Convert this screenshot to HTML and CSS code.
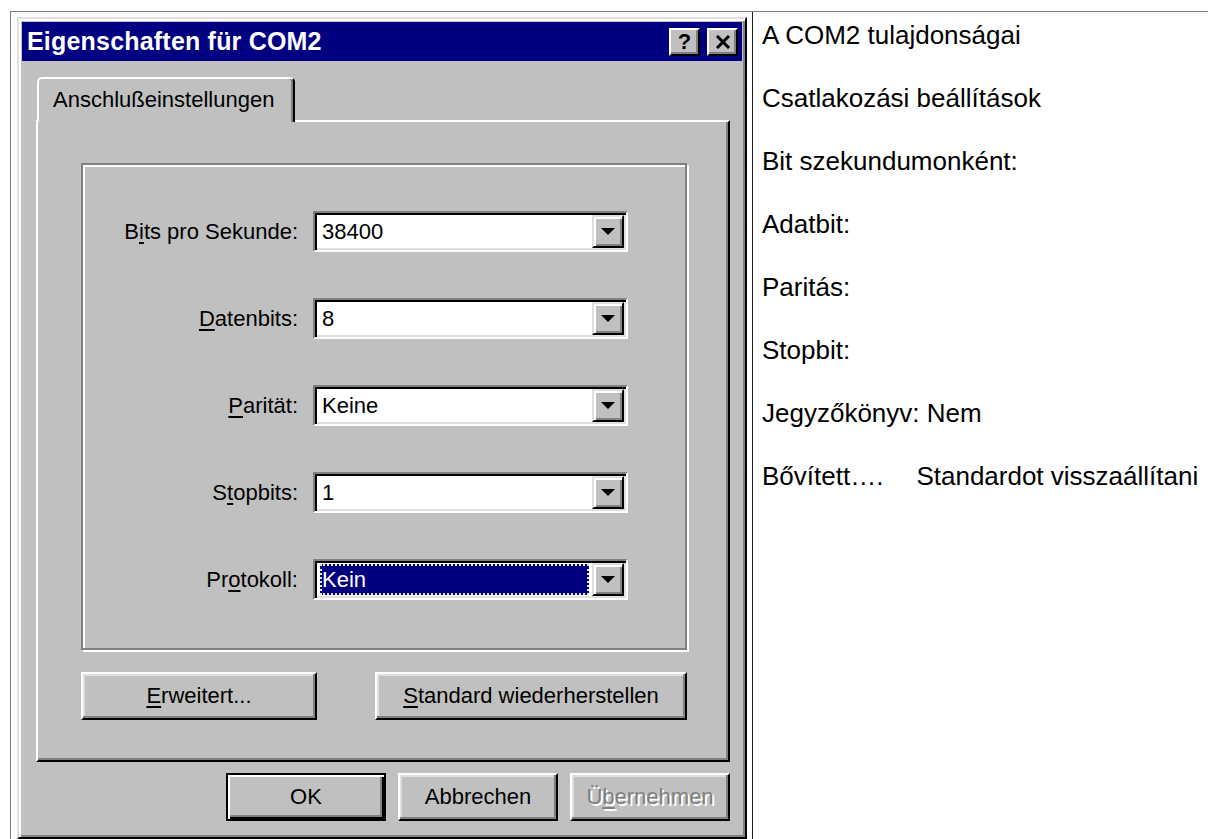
FILE: index.html
```html
<!DOCTYPE html>
<html lang="de">
<head>
<meta charset="utf-8">
<title>Eigenschaften für COM2</title>
<link rel="stylesheet" href="styles.css">
</head>
<body>
<div class="doc">
  <div class="shot">
    <div class="window">
      <div class="titlebar">
        <span class="title">Eigenschaften für COM2</span>
        <div class="cap-btns">
          <div class="cap-btn help">?</div>
          <div class="cap-btn">
            <svg width="16" height="14" viewBox="0 0 16 14"><path d="M2 1 L14 13 M14 1 L2 13" stroke="#000" stroke-width="3" fill="none"/></svg>
          </div>
        </div>
      </div>
      <div class="content">
        <div class="tabstrip">
          <div class="tab">Anschlußeinstellungen</div>
        </div>
        <div class="panel">
          <div class="group">
            <div class="row">
              <span class="label">B<u>i</u>ts pro Sekunde:</span>
              <div class="combo"><span class="value">38400</span><span class="drop"><i class="arrow"></i></span></div>
            </div>
            <div class="row">
              <span class="label"><u>D</u>atenbits:</span>
              <div class="combo"><span class="value">8</span><span class="drop"><i class="arrow"></i></span></div>
            </div>
            <div class="row">
              <span class="label"><u>P</u>arität:</span>
              <div class="combo"><span class="value">Keine</span><span class="drop"><i class="arrow"></i></span></div>
            </div>
            <div class="row">
              <span class="label">S<u>t</u>opbits:</span>
              <div class="combo"><span class="value">1</span><span class="drop"><i class="arrow"></i></span></div>
            </div>
            <div class="row">
              <span class="label">Pr<u>o</u>tokoll:</span>
              <div class="combo"><span class="value selected">Kein</span><span class="drop"><i class="arrow"></i></span></div>
            </div>
          </div>
          <div class="panel-btns">
            <div class="btn wide-1"><u>E</u>rweitert...</div>
            <div class="btn wide-2"><u>S</u>tandard wiederherstellen</div>
          </div>
        </div>
        <div class="footer">
          <div class="btn default">OK</div>
          <div class="btn">Abbrechen</div>
          <div class="btn disabled">Ü<u>b</u>ernehmen</div>
        </div>
      </div>
    </div>
  </div>
  <div class="notes">
    <p>A COM2 tulajdonságai</p>
    <p>Csatlakozási beállítások</p>
    <p>Bit szekundumonként:</p>
    <p>Adatbit:</p>
    <p>Paritás:</p>
    <p>Stopbit:</p>
    <p>Jegyzőkönyv: Nem</p>
    <p><span>Bővített….</span><span class="gap">Standardot visszaállítani</span></p>
  </div>
</div>
</body>
</html>
```

FILE: styles.css
```css
* { box-sizing: border-box; }

html, body {
  margin: 0;
  padding: 0;
  background: #fff;
}

body {
  font-family: "Liberation Sans", Arial, sans-serif;
  color: #000;
  overflow: hidden;
}

/* two-cell document table; it continues below the fold */
.doc {
  display: flex;
  margin: 11px 0 0 10px;
  border-top: 1px solid #7b7b7b;
  border-left: 1px solid #7b7b7b;
  height: 828px;
}

.shot {
  flex: 0 0 742px;
  border-right: 1px solid #1e1e1e;
  padding: 5px 0 0 6px;
}

.notes {
  flex: 1;
  padding: 8px 0 0 9px;
  font-size: 26px;
  line-height: 30px;
  display: flex;
  flex-direction: column;
  gap: 33px;
}

.notes p { margin: 0; white-space: nowrap; }
.notes .gap { margin-left: 33px; }

/* dialog window */
.window {
  width: 730px;
  height: 822px;
  background: #c0c0c0;
  border: 2px solid;
  border-color: #dfdfdf #000 #000 #dfdfdf;
  box-shadow: inset 2px 2px #fff, inset -2px -2px #808080;
  padding: 3px;
  display: flex;
  flex-direction: column;
  font-size: 22px;
}

.titlebar {
  height: 39px;
  flex: 0 0 39px;
  background: #000080;
  color: #fff;
  display: flex;
  align-items: center;
  justify-content: space-between;
  padding: 0 4px 0 5px;
}

.title {
  font-weight: bold;
  font-size: 25px;
  letter-spacing: 0.2px;
}

.cap-btns {
  display: flex;
  gap: 7px;
  margin-top: 1px;
}

.cap-btn {
  width: 31px;
  height: 28px;
  background: #c0c0c0;
  border: 2px solid;
  border-color: #fff #000 #000 #fff;
  box-shadow: inset -2px -2px #808080;
  display: flex;
  align-items: center;
  justify-content: center;
  color: #000;
}

.cap-btn.help {
  font-weight: bold;
  font-size: 22px;
  line-height: 1;
}

.content {
  flex: 1;
  padding: 16px 12px 0 14px;
  display: flex;
  flex-direction: column;
}

/* tab strip */
.tabstrip {
  display: flex;
  padding-left: 1px;
}

.tab {
  position: relative;
  z-index: 1;
  width: 258px;
  height: 45px;
  margin-bottom: -2px;
  background: #c0c0c0;
  border: 2px solid;
  border-bottom: none;
  border-color: #fff #000 transparent #fff;
  border-radius: 5px 5px 0 0;
  box-shadow: inset -2px 0 #808080;
  padding: 8px 0 0 14px;
  line-height: 25px;
  white-space: nowrap;
}

.panel {
  height: 642px;
  flex: 0 0 642px;
  border: 2px solid;
  border-color: #fff #000 #000 #fff;
  box-shadow: inset -2px -2px #808080;
  padding: 41px 0 0 43px;
}

/* etched group box */
.group {
  width: 606px;
  height: 487px;
  border: 2px solid #808080;
  box-shadow: inset 2px 2px #fff, 2px 2px #fff;
  padding: 46px 0 0 0;
  display: flex;
  flex-direction: column;
  gap: 46px;
}

.row {
  display: flex;
  align-items: center;
  height: 41px;
}

.label {
  width: 215px;
  text-align: right;
  margin-right: 15px;
  white-space: nowrap;
}

u {
  text-decoration-thickness: 2px;
  text-underline-offset: 3px;
}

/* drop-down combo */
.combo {
  width: 315px;
  height: 41px;
  background: #fff;
  border: 2px solid;
  border-color: #808080 #fff #fff #808080;
  box-shadow: inset 2px 2px #000, inset -2px -2px #dfdfdf;
  padding: 2px;
  display: flex;
}

.value {
  flex: 1;
  padding-left: 5px;
  line-height: 33px;
}

.value.selected {
  margin: 1px 3px 1px 3px;
  padding-left: 2px;
  line-height: 31px;
  background: #000080;
  color: #fff;
  outline: 2px dotted #e8e8c0;
  outline-offset: -2px;
}

.drop {
  width: 32px;
  height: 33px;
  background: #c0c0c0;
  border: 2px solid;
  border-color: #dfdfdf #000 #000 #dfdfdf;
  box-shadow: inset 2px 2px #fff, inset -2px -2px #808080;
  display: flex;
  align-items: center;
  justify-content: center;
}

.arrow {
  width: 0;
  height: 0;
  border-left: 7px solid transparent;
  border-right: 7px solid transparent;
  border-top: 7px solid #000;
}

/* push buttons */
.btn {
  height: 48px;
  background: #c0c0c0;
  border: 2px solid;
  border-color: #fff #000 #000 #fff;
  box-shadow: inset -2px -2px #808080, inset 2px 2px #dfdfdf;
  display: flex;
  align-items: center;
  justify-content: center;
  white-space: nowrap;
}

.panel-btns {
  display: flex;
  gap: 58px;
  margin-top: 22px;
}

.wide-1 { width: 236px; }
.wide-2 { width: 312px; }

.footer {
  display: flex;
  justify-content: flex-end;
  gap: 12px;
  padding-top: 11px;
}

.footer .btn { width: 160px; }

.btn.default {
  border-color: #000;
  box-shadow: inset 2px 2px #fff, inset -2px -2px #000, inset -4px -4px #808080;
}

.btn.disabled {
  color: #808080;
  text-shadow: 2px 2px 0 #fff;
}
```
